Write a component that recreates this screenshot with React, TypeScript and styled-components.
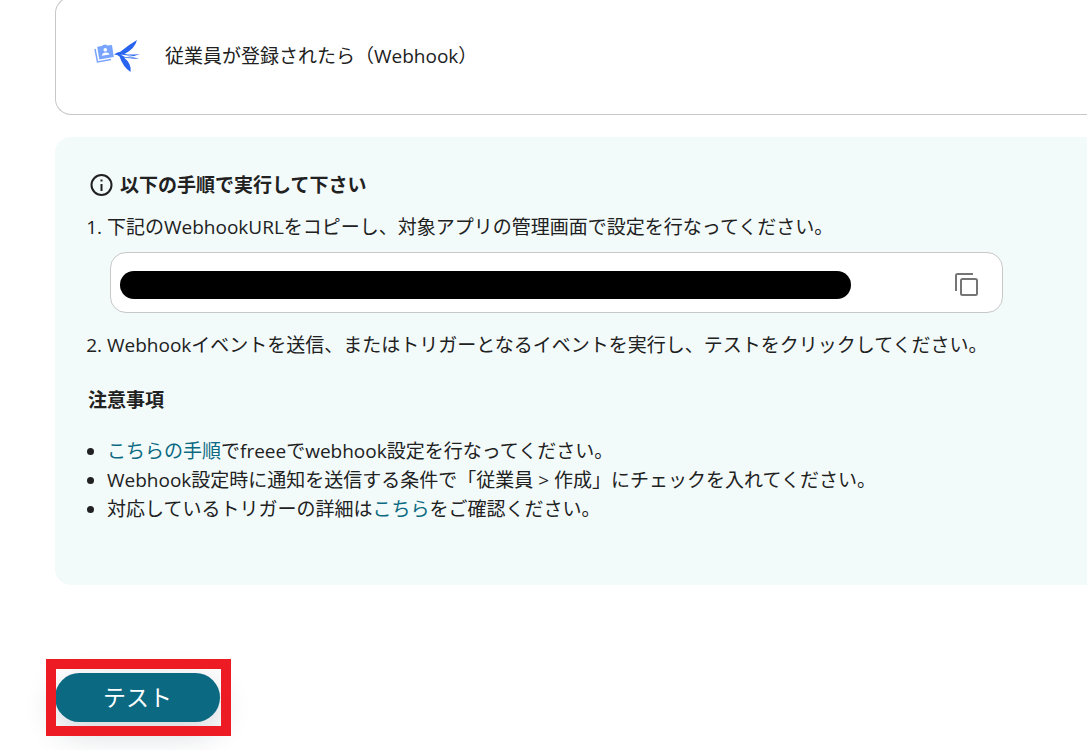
import React from "react";
import styled, { createGlobalStyle } from "styled-components";

const GlobalStyle = createGlobalStyle`
  * { box-sizing: border-box; }
  body {
    margin: 0;
    background: #fff;
    color: #212121;
    font-family: "Open Sans", "Noto Sans CJK JP", sans-serif;
    font-size: 19px;
    line-height: 29px;
  }
`;

const Page = styled.main`
  display: flow-root;
  min-height: 100vh;
  padding: 0 0 28px 55px;
`;

const TriggerCard = styled.section`
  display: flex;
  align-items: center;
  gap: 25px;
  height: 118px;
  margin-top: -3px;
  padding-left: 38px;
  border: 1px solid #c8c8c8;
  border-right: 0;
  border-radius: 16px 0 0 16px;
`;

const TriggerName = styled.p`
  margin: 0;
`;

const Panel = styled.section`
  margin-top: 22px;
  padding: 34px 84px 61px 33px;
  border-radius: 16px 0 0 16px;
  background: #f2fafa;
`;

const PanelTitle = styled.h2`
  display: flex;
  align-items: center;
  gap: 6px;
  margin: 0 0 13px;
  font-size: 19px;
  font-weight: 700;
`;

const NoteTitle = styled.h3`
  margin: 26px 0 22px;
  font-size: 19px;
  font-weight: 700;
`;

const Steps = styled.ol`
  margin: 0;
  padding-left: 19px;
`;

const Notes = styled.ul`
  margin: 0;
  padding-left: 19px;
`;

const UrlField = styled.div`
  display: flex;
  align-items: center;
  justify-content: space-between;
  height: 61px;
  margin: 10px 0 18px 3px;
  padding: 4px 20px 0 9px;
  border: 1px solid #c8c8c8;
  border-radius: 16px;
  background: #fff;
`;

const MaskedUrl = styled.input`
  flex: 0 1 731px;
  min-width: 0;
  height: 28px;
  padding: 0 14px;
  border: 0;
  border-radius: 14px;
  background: #000;
  color: #000;
`;

const CopyButton = styled.button`
  display: flex;
  padding: 0;
  border: 0;
  background: none;
  color: #757575;
  cursor: pointer;
`;

const TextLink = styled.a`
  color: #0b6a82;
  text-decoration: none;
`;

const Actions = styled.div`
  position: relative;
  width: fit-content;
  margin-top: 88px;
`;

const TestButton = styled.button`
  display: block;
  width: 165px;
  height: 49px;
  padding: 0;
  border: 0;
  border-radius: 25px;
  background: #0b6a82;
  color: #fff;
  font: inherit;
  font-size: 23px;
  box-shadow: 0 10px 32px rgba(30, 40, 70, 0.2);
  cursor: pointer;
`;

const Highlight = styled.span`
  position: absolute;
  inset: -14px -11px -14px -9px;
  border: 10px solid #ed1c24;
  pointer-events: none;
`;

const FreeeIcon = () => (
  <svg width="46" height="34" viewBox="0 -1 46 34" aria-hidden="true">
    <path d="M1 9 L3.5 22 L17 19.5" fill="none" stroke="#7aa5ff" strokeWidth="1.5" />
    <path d="M3.2 6.8 L8 6 L9 5 L12 4.6 L13 5.4 L18 5 L19.8 17 L5.3 19.5 Z" fill="#78a4ff" />
    <circle cx="11.3" cy="9.8" r="1.8" fill="#fff" />
    <path d="M7.8 15.7 Q8.2 12.8 11.7 12.5 Q15 12.2 15.6 14.6 Z" fill="#fff" />
    <path d="M20 14.6 L22.5 13 Q24 12 26 12 Q35 4.5 43 0 Q41 8.5 30.5 14 Q37 15 46 14 Q40 16.5 34.5 16.5 L45 18.5 Q37 19 30 17.5 Q38 24 36.5 32 Q29 27 25.5 16.5 Q23.5 14.8 20 14.6 Z" fill="#2864f0" />
    <path d="M26.5 14.5 L34 15.5 L40 15.4 L34 16.2 L39 17.7 L31 17 Z" fill="#fff" />
  </svg>
);

const InfoIcon = () => (
  <svg width="26" height="24" viewBox="0 1 26 24" fill="none" stroke="#212121" strokeWidth="2" aria-hidden="true">
    <circle cx="13.5" cy="12" r="10" />
    <path d="M13.5 11v7" />
    <path d="M13.5 6.5v2" />
  </svg>
);

const CopyIcon = () => (
  <svg width="28" height="28" viewBox="0 0 28 28" fill="none" stroke="currentColor" strokeWidth="2" aria-hidden="true">
    <path d="M2 20V4.5Q2 3 3.5 3H19" />
    <rect x="7" y="8" width="16" height="16" rx="1.5" />
  </svg>
);

export default function App() {
  return (
    <>
      <GlobalStyle />
      <Page>
        <TriggerCard>
          <FreeeIcon />
          <TriggerName>従業員が登録されたら（Webhook）</TriggerName>
        </TriggerCard>
        <Panel>
          <PanelTitle>
            <InfoIcon />
            以下の手順で実行して下さい
          </PanelTitle>
          <Steps>
            <li>
              下記のWebhookURLをコピーし、対象アプリの管理画面で設定を行なってください。
              <UrlField>
                <MaskedUrl type="text" readOnly aria-label="WebhookURL" />
                <CopyButton type="button" aria-label="コピー">
                  <CopyIcon />
                </CopyButton>
              </UrlField>
            </li>
            <li>Webhookイベントを送信、またはトリガーとなるイベントを実行し、テストをクリックしてください。</li>
          </Steps>
          <NoteTitle>注意事項</NoteTitle>
          <Notes>
            <li>
              <TextLink href="#steps">こちらの手順</TextLink>でfreeeでwebhook設定を行なってください。
            </li>
            <li>Webhook設定時に通知を送信する条件で「従業員 &gt; 作成」にチェックを入れてください。</li>
            <li>
              対応しているトリガーの詳細は<TextLink href="#triggers">こちら</TextLink>をご確認ください。
            </li>
          </Notes>
        </Panel>
        <Actions>
          <TestButton type="button">テスト</TestButton>
          <Highlight />
        </Actions>
      </Page>
    </>
  );
}
